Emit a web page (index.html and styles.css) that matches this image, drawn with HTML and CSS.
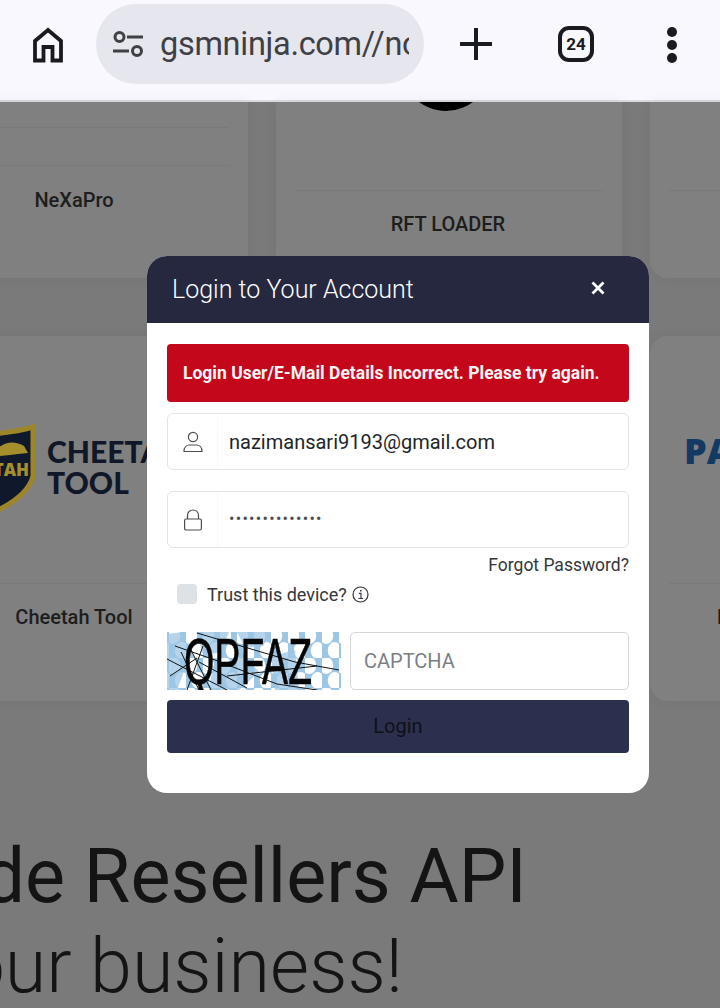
FILE: index.html
```html
<!doctype html>
<html lang="en">

<head>
    <meta charset="utf-8">
    <meta name="viewport" content="width=device-width, initial-scale=1">
    <title>Login to Your Account</title>
    <link rel="stylesheet" href="styles.css">
</head>

<body>
    <!-- browser toolbar -->
    <div class="toolbar">
        <svg class="home-icon" width="34" height="36" viewBox="0 0 34 36">
            <path d="M4 33.500V14L17 3 30 14V33.500H21.500V20H12.500V33.500Z" fill="none" stroke="#1a1b20" stroke-width="3.800" stroke-linejoin="miter"/>
        </svg>
        <div class="url-bar">
            <svg width="32" height="26" viewBox="0 0 32 26">
                <circle cx="6.500" cy="6" r="4.500" fill="none" stroke="#3f4046" stroke-width="3"/>
                <path d="M14 6H30M0 20H16" stroke="#3f4046" stroke-width="3"/>
                <circle cx="24" cy="20" r="4.500" fill="none" stroke="#3f4046" stroke-width="3"/>
            </svg>
            <div class="url-text">gsmninja.com//nologin</div>
        </div>
        <svg class="plus-icon" width="32" height="32" viewBox="0 0 32 32">
            <path d="M16 1V31M1 16H31" stroke="#1a1b20" stroke-width="4" stroke-linecap="round"/>
        </svg>
        <div class="tab-count">24</div>
        <div class="menu-dots"><span></span><span></span><span></span></div>
    </div>

    <!-- page behind the dialog -->
    <div class="page">
        <div class="card-row first-row">
            <div class="card">
                <div class="rule rule-a"></div>
                <div class="rule rule-b"></div>
                <div class="card-label label-a">NeXaPro</div>
            </div>
            <div class="card">
                <svg class="round-logo" width="90" height="9" viewBox="0 36 90 9"><circle cx="45" cy="0" r="45" fill="#000"/></svg>
                <div class="rule rule-c"></div>
                <div class="card-label label-b">RFT LOADER</div>
            </div>
            <div class="card">
                <div class="rule rule-d"></div>
            </div>
        </div>
        <div class="card-row second-row">
            <div class="card">
                <div class="logo-box">
                    <svg class="shield" width="133" height="92" viewBox="0 0 133 92">
                        <path d="M44 12C78 12 110 9 131 3V52C127 68 108 81 88 90C70 82 52 72 44 52Z" fill="#10182c" stroke="#9c8629" stroke-width="5"/>
                        <path d="M96 24C104 17 114 17 122 22L126 29 116 30 108 31 98 32Z" fill="#a58e2c"/>
                        <text x="88" y="52" text-anchor="middle" class="shield-text">CHEETAH</text>
                    </svg>
                    <div class="logo-words">CHEETAH<br>TOOL</div>
                </div>
                <div class="rule"></div>
                <div class="card-label">Cheetah Tool</div>
            </div>
            <div class="card"></div>
            <div class="card">
                <div class="logo-box pa-box">
                    <div class="pa-word">PANDORA</div>
                </div>
                <div class="rule"></div>
                <div class="card-label">Pandora Flash Tool Box</div>
            </div>
        </div>
        <h1 class="promo"><span class="promo-top">Worldwide Resellers API</span><span class="promo-bottom">Grow your business!</span></h1>
    </div>

    <!-- login dialog -->
    <div class="modal">
        <div class="modal-head">
            <div class="modal-title">Login to Your Account</div>
            <svg class="close-icon" width="14" height="14" viewBox="0 0 14 14">
                <path d="M1.500 1.500L12.500 12.500M12.500 1.500L1.500 12.500" stroke="#fff" stroke-width="2.800"/>
            </svg>
        </div>
        <div class="modal-body">
            <div class="alert">Login User/E-Mail Details Incorrect. Please try again.</div>
            <div class="input-group">
                <div class="addon">
                    <svg width="20" height="22" viewBox="0 0 20 22" fill="none" stroke="#4a4d52" stroke-width="1.200">
                        <circle cx="10" cy="6" r="4.600"/>
                        <path d="M1 20.500C1 16.500 3.500 14 6.500 14H13.500C16.500 14 19 16.500 19 20.500Z" stroke-linejoin="round"/>
                    </svg>
                </div>
                <div class="input-text">nazimansari9193@gmail.com</div>
            </div>
            <div class="input-group second-input">
                <div class="addon">
                    <svg width="20" height="22" viewBox="0 0 20 22" fill="none" stroke="#4a4d52" stroke-width="1.200">
                        <path d="M4.500 10V6.500C4.500 3.200 6.800 1 10 1S15.500 3.200 15.500 6.500V10"/>
                        <rect x="1.600" y="10" width="16.800" height="11" rx="1.500"/>
                    </svg>
                </div>
                <div class="input-text dots">••••••••••••••</div>
            </div>
            <div class="forgot">Forgot Password?</div>
            <div class="trust">
                <span class="check"></span>
                <span>Trust this device?</span>
                <svg width="17" height="17" viewBox="0 0 17 17" fill="none" stroke="#33363a" stroke-width="1.200">
                    <circle cx="8.500" cy="8.500" r="7.500"/>
                    <path d="M6.800 7.300H9V12.500M6.500 12.500H11.200" />
                    <path d="M8 4H9.500V5.500H8Z" fill="#33363a" stroke="none"/>
                </svg>
            </div>
            <div class="captcha-row">
                <svg class="captcha" width="174" height="58" viewBox="0 0 174 58">
                    <defs>
                        <pattern id="honeycomb" x="2" y="-4" width="17" height="30" patternUnits="userSpaceOnUse">
                            <rect width="17" height="30" fill="#9cc6e4"/>
                            <ellipse cx="4.250" cy="7.500" rx="7" ry="8.500" fill="#fff"/>
                            <ellipse cx="12.750" cy="22.500" rx="7" ry="8.500" fill="#fff"/>
                        </pattern>
                    </defs>
                    <rect width="174" height="58" fill="url(#honeycomb)"/>
                    <!-- blue patches over the left of the grid -->
                    <path d="M0 2L16 0 22 26 10 58H0ZM30 0H62L54 20 36 24ZM70 0H104L96 14 78 16ZM46 34L78 24 92 40 72 58H42ZM104 24L128 18 132 58H108Z" fill="#9cc6e4" opacity=".75"/>
                    <path d="M30 1L128 30 172 38M0 27L60 58M8 14L48 28 110 52 150 58M3 44L30 26M20 58L36 14M14 20L32 58M24 18L44 58M60 44L150 34M32 30L80 56" stroke="#111" stroke-width="1" fill="none"/>
                    <text x="17" y="52" class="captcha-text" textLength="128" lengthAdjust="spacingAndGlyphs">QPFAZ</text>
                </svg>
                <div class="captcha-input">CAPTCHA</div>
            </div>
            <div class="login-btn">Login</div>
        </div>
    </div>
</body>
</html>
```

FILE: styles.css
```css
html, body {
    margin: 0;
    padding: 0;
}
body {
    width: 720px;
    height: 1008px;
    overflow: hidden;
    position: relative;
    font-family: Roboto, "Liberation Sans", sans-serif;
    background-color: #7a7a7a;
}
.toolbar {
    height: 100px;
    border-bottom: 2px solid #dcdcde;
    background-color: #f8f8fe;
    display: flex;
    align-items: flex-start;
}
.home-icon {
    margin: 27px 0 0 31px;
}
.url-bar {
    width: 328px;
    height: 80px;
    margin: 4px 0 0 31px;
    padding-left: 17px;
    box-sizing: border-box;
    border-radius: 40px;
    background-color: #e6e6ee;
    display: flex;
    align-items: center;
    flex-shrink: 0;
}
.url-text {
    width: 249px;
    margin-left: 15px;
    overflow: hidden;
    white-space: nowrap;
    font-size: 32.500px;
    letter-spacing: -.3px;
    color: #3f4046;
}
.plus-icon {
    margin: 28px 0 0 36px;
}
.tab-count {
    width: 36px;
    height: 36px;
    margin: 26px 0 0 66px;
    box-sizing: border-box;
    border: 4px solid #1a1b20;
    border-radius: 11px;
    font-size: 17px;
    font-weight: 700;
    line-height: 28px;
    text-align: center;
    color: #1a1b20;
}
.menu-dots {
    margin: 27px 0 0 73px;
    display: flex;
    flex-direction: column;
    gap: 3px;
}
.menu-dots span {
    width: 10px;
    height: 10px;
    border-radius: 50%;
    background-color: #1a1b20;
}

/* page under the overlay */
.page {
    margin-left: -98px;
    width: 1094px;
}
.card-row {
    display: grid;
    grid-template-columns: 346px 346px 346px;
    gap: 28px;
}
.first-row {
    height: 176px;
}
.second-row {
    height: 365px;
    margin-top: 58px;
}
.card {
    background-color: #808080;
    box-shadow: 0 0 14px rgba(0, 0, 0, .06);
    border-radius: 18px;
    display: flow-root;
}
.first-row .card {
    border-top-left-radius: 0;
    border-top-right-radius: 0;
}
.rule {
    height: 1px;
    margin: 0 19px;
    background-color: #797979;
}
.rule-a { margin-top: 25px; }
.rule-b { margin-top: 37px; }
.rule-c { margin-top: 79px; }
.rule-d { margin-top: 88px; }
.round-logo {
    display: block;
    margin-left: 125px;
}
.card-label {
    padding-right: 2px;
    font-size: 20px;
    font-weight: 500;
    line-height: 24px;
    text-align: center;
    color: #1d1d1d;
}
.label-a { margin-top: 22px; }
.label-b { margin-top: 21px; }
.second-row .card-label { margin-top: 21px; }
.logo-box {
    height: 247px;
    padding-top: 88px;
    box-sizing: border-box;
    display: flex;
    align-items: flex-start;
    overflow: hidden;
}
.shield-text {
    font-family: "Open Sans", sans-serif;
    font-size: 17px;
    font-weight: 800;
    fill: #a58e2c;
}
.logo-words {
    margin: 12px 0 0 12px;
    font-family: Lato, sans-serif;
    font-size: 30px;
    font-weight: 900;
    line-height: 31px;
    white-space: nowrap;
    color: #101728;
}
.pa-box {
    padding: 97px 0 0 34px;
}
.pa-word {
    font-family: "Open Sans", sans-serif;
    font-size: 36px;
    font-weight: 800;
    line-height: 36px;
    color: #123a63;
}
.promo {
    margin: 0;
    padding-top: 130px;
    font-weight: 400;
    color: #141414;
    white-space: nowrap;
}
.promo span {
    display: block;
}
.promo-top {
    margin-left: -190px;
    font-size: 75.500px;
    line-height: 90px;
}
.promo-bottom {
    margin-left: -169px;
    font-size: 75.500px;
    font-weight: 300;
    line-height: 90px;
}

/* dialog */
.modal {
    position: absolute;
    top: 256px;
    left: 147px;
    width: 502px;
    height: 537px;
    border-radius: 20px;
    overflow: hidden;
    background-color: #fff;
}
.modal-head {
    height: 67px;
    padding: 0 44px 0 25px;
    background-color: #262840;
    display: flex;
    align-items: center;
    justify-content: space-between;
}
.modal-title {
    font-size: 25px;
    font-weight: 300;
    color: #fff;
}
.close-icon {
    margin-top: -3px;
}
.modal-body {
    padding: 21px 20px 0;
}
.alert {
    height: 58px;
    padding-left: 16px;
    border-radius: 4px;
    background-color: #c4071b;
    font-size: 17.500px;
    font-weight: 700;
    line-height: 58px;
    color: #f4f4f4;
}
.input-group {
    height: 57px;
    margin-top: 11px;
    box-sizing: border-box;
    border: 1px solid #e3e3e7;
    border-radius: 6px;
    display: flex;
    align-items: center;
}
.second-input {
    margin-top: 21px;
}
.addon {
    width: 49px;
    height: 100%;
    border-right: 1px solid #f8f8fa;
    display: flex;
    align-items: center;
    justify-content: center;
}
.input-text {
    margin-left: 11px;
    font-size: 20px;
    color: #212529;
}
.dots {
    margin-top: -2px;
    font-size: 16px;
    letter-spacing: 1.300px;
    color: #4a4d52;
}
.forgot {
    margin-top: 6px;
    font-size: 17.500px;
    line-height: 22px;
    text-align: right;
    color: #33363a;
}
.trust {
    margin: 6px 0 0 10px;
    height: 24px;
    display: flex;
    align-items: center;
    font-size: 18px;
    color: #33363a;
}
.check {
    width: 20px;
    height: 20px;
    margin-right: 10px;
    border-radius: 4px;
    background-color: #dde2e6;
}
.trust svg {
    margin-left: 5px;
}
.captcha-row {
    margin-top: 26px;
    display: flex;
    gap: 9px;
}
.captcha {
    display: block;
}
.captcha-text {
    font-family: "Liberation Sans", sans-serif;
    font-size: 64px;
    stroke: #050505;
    stroke-width: .6px;
    fill: #050505;
}
.captcha-input {
    flex: 1;
    height: 58px;
    padding-left: 13px;
    box-sizing: border-box;
    border: 1px solid #d6d6da;
    border-radius: 5px;
    font-size: 20px;
    line-height: 56px;
    color: #7b7f84;
}
.login-btn {
    height: 53px;
    margin-top: 10px;
    border-radius: 4px;
    background-color: #2c304f;
    font-size: 20px;
    line-height: 53px;
    text-align: center;
    color: #0f1016;
}
```
